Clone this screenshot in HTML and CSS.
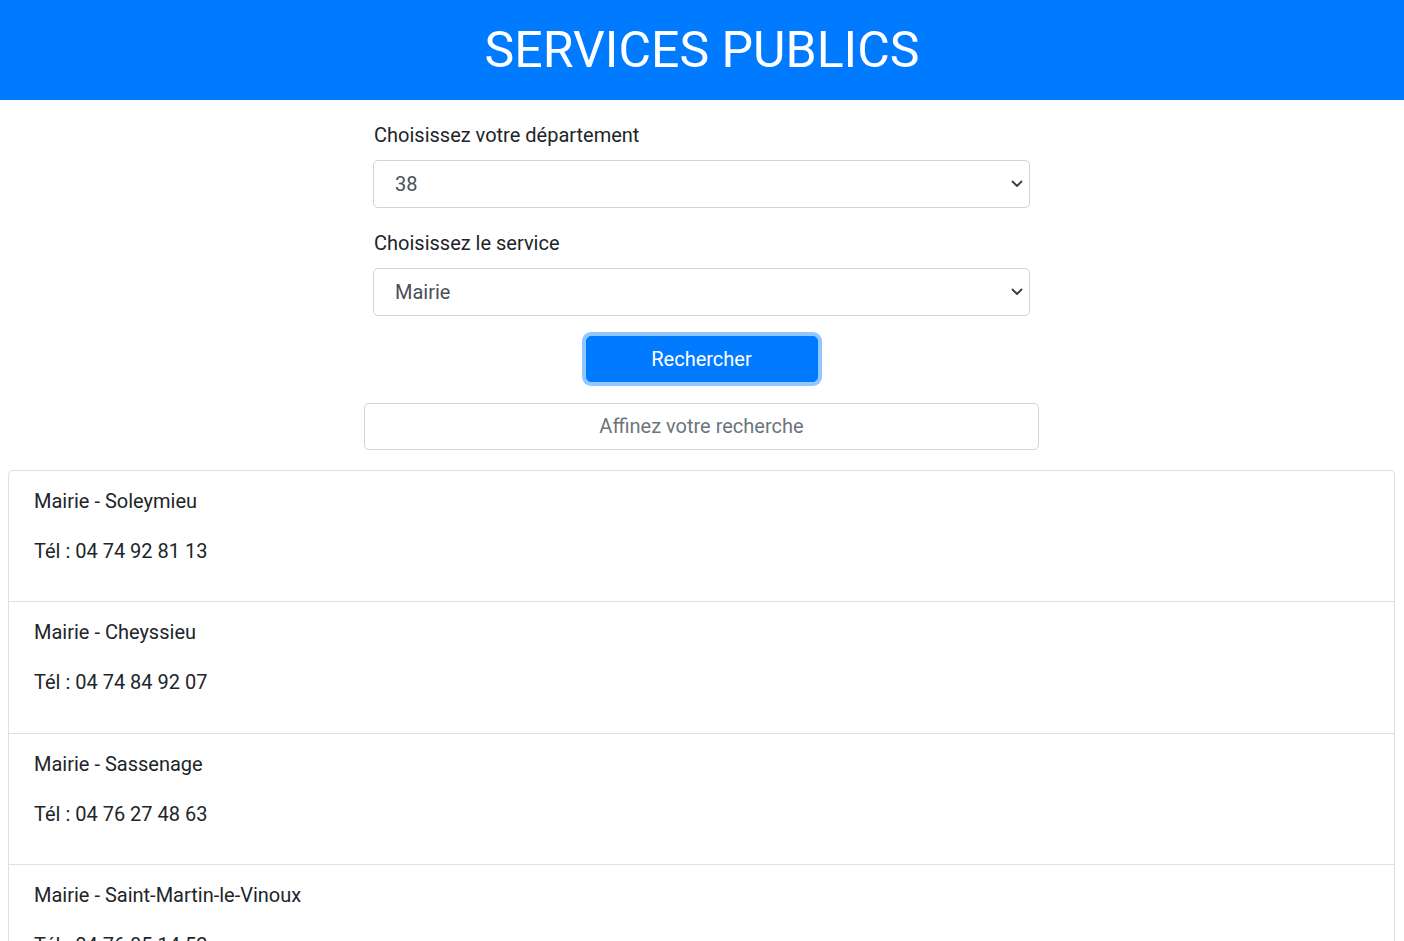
FILE: index.html
```html
<!DOCTYPE html>
<html lang="fr">
<head>
<meta charset="utf-8">
<title>Services publics</title>
<link rel="stylesheet" href="styles.css">
</head>
<body>
<header class="header">
  <h1 class="title">SERVICES PUBLICS</h1>
</header>
<main class="main">
  <form class="search-form">
    <div class="form-group">
      <label class="label" for="dep">Choisissez votre département</label>
      <div class="select-wrap">
        <select id="dep" class="select"><option>38</option></select>
        <svg class="chevron" width="12" height="8" viewBox="0 0 12 8"><path d="M1.5 1.5 L6 6 L10.5 1.5" fill="none" stroke="#3a3f44" stroke-width="1.8" stroke-linecap="round" stroke-linejoin="round"/></svg>
      </div>
    </div>
    <div class="form-group">
      <label class="label" for="svc">Choisissez le service</label>
      <div class="select-wrap">
        <select id="svc" class="select"><option>Mairie</option></select>
        <svg class="chevron" width="12" height="8" viewBox="0 0 12 8"><path d="M1.5 1.5 L6 6 L10.5 1.5" fill="none" stroke="#3a3f44" stroke-width="1.8" stroke-linecap="round" stroke-linejoin="round"/></svg>
      </div>
    </div>
    <div class="btn-row">
      <button type="button" class="btn">Rechercher</button>
    </div>
  </form>
  <div class="filter-row">
    <input class="filter" type="text" placeholder="Affinez votre recherche">
  </div>
  <ul class="list">
    <li class="item"><p>Mairie - Soleymieu</p><p>Tél : 04 74 92 81 13</p></li>
    <li class="item"><p>Mairie - Cheyssieu</p><p>Tél : 04 74 84 92 07</p></li>
    <li class="item"><p>Mairie - Sassenage</p><p>Tél : 04 76 27 48 63</p></li>
    <li class="item"><p>Mairie - Saint-Martin-le-Vinoux</p><p>Tél : 04 76 85 14 52</p></li>
  </ul>
</main>
</body>
</html>
```
FILE: styles.css
```css
* { box-sizing: border-box; }
html, body { margin: 0; padding: 0; }
body {
  font-family: Roboto, "Liberation Sans", Arial, sans-serif;
  font-size: 20px;
  line-height: 1.5;
  color: #212529;
  background: #fff;
}
.header {
  background: #007bff;
  height: 100px;
  display: flex;
  align-items: center;
  justify-content: center;
}
.title {
  margin: 0;
  color: #fff;
  font-weight: 400;
  font-size: 50px;
  line-height: 1.2;
}
.main {
  padding-top: 20px;
  padding-right: 1px;
}
.search-form {
  width: 657px;
  margin: 0 auto;
}
.form-group {
  margin-bottom: 20px;
}
.label {
  display: block;
  margin-bottom: 10px;
  padding-left: 1px;
  line-height: 30px;
}
.select-wrap {
  position: relative;
}
.select {
  display: block;
  width: 100%;
  height: 48px;
  padding: 0 40px 0 21px;
  font-family: inherit;
  font-size: 20px;
  color: #495057;
  background: #fff;
  border: 1px solid #ced4da;
  border-radius: 5px;
  appearance: none;
  -webkit-appearance: none;
}
.chevron {
  position: absolute;
  right: 7px;
  top: 20px;
  pointer-events: none;
}
.btn-row {
  display: flex;
  justify-content: center;
}
.btn {
  width: 232px;
  height: 46px;
  font-family: inherit;
  font-size: 20px;
  color: #fff;
  background: #007bff;
  border: 1px solid #007bff;
  border-radius: 5px;
  box-shadow: 0 0 0 4px rgba(38, 143, 255, 0.5);
  padding: 0;
}
.filter-row {
  display: flex;
  justify-content: center;
  margin-top: 21px;
}
.filter {
  width: 675px;
  height: 47px;
  padding: 0 0 1px 0;
  font-family: inherit;
  font-size: 20px;
  text-align: center;
  color: #495057;
  border: 1px solid #ced4da;
  border-radius: 5px;
  background: #fff;
}
.filter::placeholder { color: #6c757d; }
.list {
  list-style: none;
  margin: 20px 8px 0 8px;
  padding: 0;
  border: 1px solid rgba(0, 0, 0, 0.125);
  border-radius: 5px;
}
.item {
  padding: 15px 25px 15.34px 25px;
  border-bottom: 1px solid rgba(0, 0, 0, 0.125);
}
.item:last-child { border-bottom: 0; }
.item p {
  margin: 0 0 20px 0;
}
```
